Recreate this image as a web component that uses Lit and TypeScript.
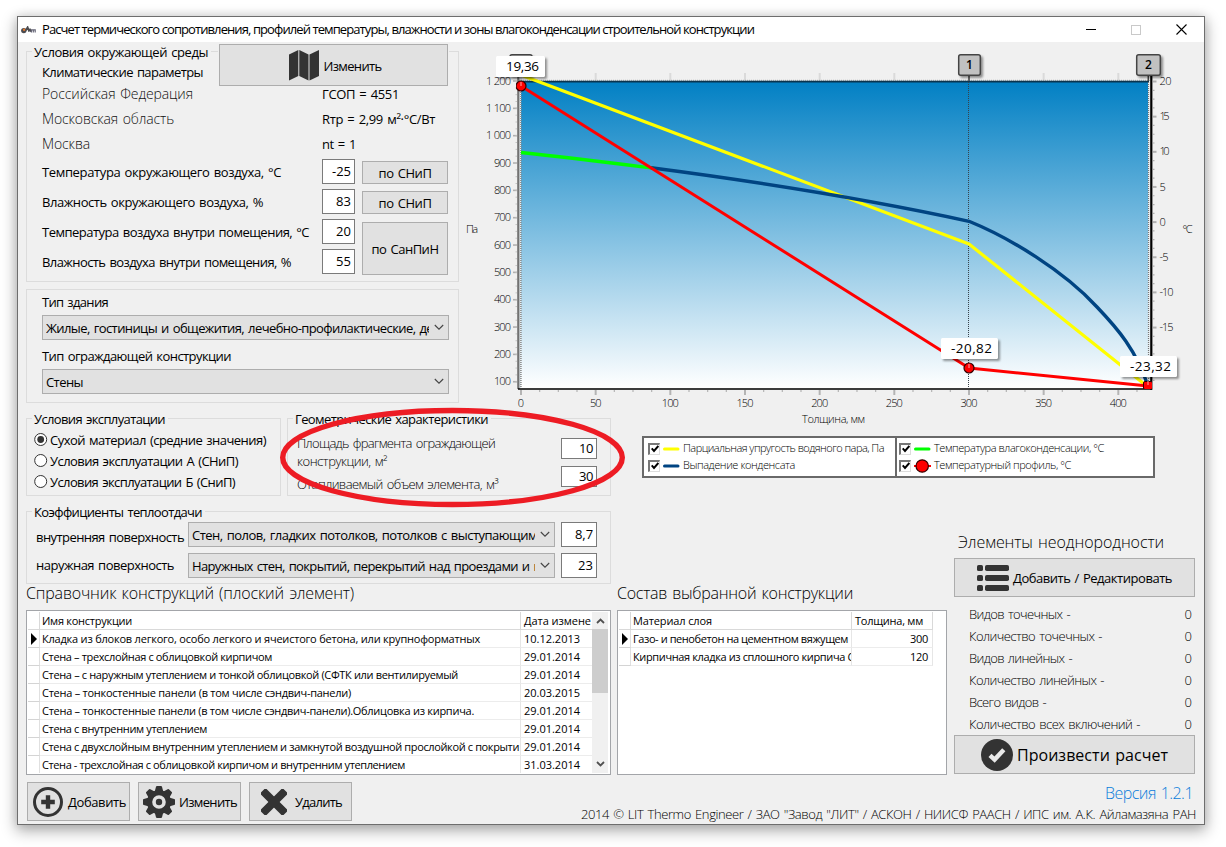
import { LitElement, html, css, svg } from "lit";
import { customElement } from "lit/decorators.js";

/** Text run set to a known advance width; letter-spacing is derived after layout. */
const t = (text: string, width: number, cls = "") =>
  html`<span class="t ${cls}" data-w=${width}>${text}</span>`;

const X = (mm: number) => 521 + mm * 1.4933;
const YP = (pa: number) => 81 + (1200 - pa) * 0.2734;
const YT = (deg: number) => 81.5 + (20 - deg) * 7.03;

const constructions: [string, number, string][] = [
  ["Кладка из блоков легкого, особо легкого и ячеистого бетона, или крупноформатных", 438, "10.12.2013"],
  ["Стена – трехслойная с облицовкой кирпичом", 230, "29.01.2014"],
  ["Стена – с наружным утеплением и тонкой облицовкой (СФТК или вентилируемый", 416, "29.01.2014"],
  ["Стена – тонкостенные панели (в том числе сэндвич-панели)", 309, "20.03.2015"],
  ["Стена – тонкостенные панели (в том числе сэндвич-панели).Облицовка из кирпича.", 432, "29.01.2014"],
  ["Стена с внутренним утеплением", 165, "29.01.2014"],
  ["Стена с двухслойным внутренним утеплением и замкнутой воздушной прослойкой с покрыти", 477, "29.01.2014"],
  ["Стена - трехслойная с облицовкой кирпичом и внутренним утеплением", 363, "31.03.2014"],
];

const layers: [string, number, string][] = [
  ["Газо- и пенобетон на цементном вяжущем", 215, "300"],
  ["Кирпичная кладка из сплошного кирпича С", 221, "120"],
];

const stats: [string, number][] = [
  ["Видов точечных -", 101],
  ["Количество точечных -", 133],
  ["Видов линейных -", 103],
  ["Количество линейных -", 135],
  ["Всего видов -", 77],
  ["Количество всех включений -", 171],
];

const chevron = html`<svg class="chev" width="10" height="7" viewBox="0 0 10 7"><path d="M.8 1 5 5.2 9.2 1" fill="none" stroke="#444" stroke-width="1.1"/></svg>`;
const marker = html`<svg width="7" height="12" viewBox="0 0 7 12"><path d="M0 0 6 6 0 12z" fill="#000"/></svg>`;

const mapIcon = html`<svg width="30" height="31" viewBox="0 0 30 31" fill="#333"><path d="M0 4.5 9.3 0v26L0 30.5z"/><path d="M10.3 0l9.2 4.5v26L10.3 26z"/><path d="M20.5 4.5 30 0v26l-9.5 4.5z"/></svg>`;
const plusIcon = html`<svg width="30" height="30" viewBox="0 0 30 30" fill="none" stroke="#333"><circle cx="15" cy="15" r="13.5" stroke-width="3"/><path d="M15 8.2v13.6M8.2 15h13.6" stroke-width="4.4"/></svg>`;
const gearIcon = html`<svg width="32" height="32" viewBox="-16 -16 32 32" fill="#333">
  ${[0, 45, 90, 135, 180, 225, 270, 315].map((a) => svg`<path transform="rotate(${a})" d="M-4.4-10 -3-15.2Q-2.8-16-2-16H2Q2.8-16 3-15.2L4.4-10z"/>`)}
  <path fill-rule="evenodd" d="M-12 0a12 12 0 1 0 24 0a12 12 0 1 0 -24 0zM-6.8 0a6.8 6.8 0 1 1 13.6 0a6.8 6.8 0 1 1 -13.6 0z"/><circle r="3.2"/></svg>`;
const crossIcon = html`<svg width="26" height="26" viewBox="-13 -13 26 26" fill="#333"><rect x="-16" y="-4" width="32" height="8" rx="1.8" transform="rotate(45)"/><rect x="-16" y="-4" width="32" height="8" rx="1.8" transform="rotate(-45)"/></svg>`;
const listIcon = html`<svg width="32" height="26" viewBox="0 0 32 26" fill="#333">
  ${[0, 10, 20].map((y) => svg`<rect x="0" y=${y} width="6" height="6" rx="1.6"/><rect x="8" y=${y} width="24" height="6" rx="1.8"/>`)}</svg>`;
const checkIcon = html`<svg width="32" height="32" viewBox="0 0 32 32"><circle cx="16" cy="16" r="16" fill="#333"/><path d="M9 16.3 13.6 20.6 22.8 10.8" fill="none" stroke="#e9e9e9" stroke-width="4.4"/></svg>`;

@customElement("app-root")
export class AppRoot extends LitElement {
  static styles = css`
    :host { display: block; position: relative; width: 1226px; height: 847px; overflow: hidden; background: #fff;
      font: 13px/16px "Open Sans", "Noto Sans", sans-serif; color: #000; }
    * { box-sizing: border-box; }
    svg { display: block; flex: none; }
    .t { white-space: pre; display: inline-block; flex: none; padding-bottom: 2px; word-spacing: 1.2px; }
    .title, .f11, .lg { word-spacing: 0; }
    .light { font-weight: 300; }
    .l14 { font-weight: 300; font-size: 14px; color: #111; }
    .l16 { font-weight: 300; font-size: 16px; line-height: 20px; }
    .s16 { font-size: 16px; line-height: 20px; }
    .f11 { font-size: 11px; padding-bottom: 0; }
    .lg { font-size: 11px; font-weight: 300; }
    .clip { overflow: hidden; flex: 1; min-width: 0; display: flex; }

    .window { margin: 16px 0 0 17px; width: 1188px; height: 809px; border: 1px solid #6e6e6e; background: #f0f0f0;
      display: flex; flex-direction: column; box-shadow: 0 5px 14px 1px rgba(0,0,0,.32), 0 0 9px rgba(0,0,0,.10); }
    .titlebar { height: 25px; background: #fff; display: flex; align-items: center; flex: none; padding-left: 3px; }
    .titlebar .t { margin-left: 6px; }
    .winbtns { margin-left: auto; display: flex; align-items: center; gap: 35px; padding-right: 17px; }
    .top { display: flex; height: 363px; flex: none; padding-left: 8px; }
    .topleft { width: 434px; flex: none; display: flex; flex-direction: column; padding: 9px 1px 0 0; }
    .chart { overflow: visible; }

    .group { border: 1px solid #dcdcdc; display: flex; flex-direction: column; }
    .legend { margin: -8px 0 0 5px; height: 16px; padding: 0 3px 0 2px; background: #f0f0f0; align-self: flex-start; flex: none; display: flex; }
    .env { height: 231px; }
    .envhead { display: flex; height: 33px; margin-top: -8px; flex: none; }
    .envhead .legend { margin-top: 0; }
    .envtitles { display: flex; flex-direction: column; align-items: flex-start; width: 192px; }
    .envtitles > .t { margin: 4px 0 0 15px; }
    .button { background: #e1e1e1; border: 1px solid #adadad; display: flex; align-items: center; justify-content: center; flex: none; }
    .mapbtn { width: 229px; height: 42px; gap: 5px; box-shadow: -1px 0 0 #f0f0f0, 1px 0 0 #f0f0f0; padding-left: 3px; }
    .mapbtn .t { margin-top: 4px; }
    .place { display: grid; grid-template-columns: 280px 1fr; grid-auto-rows: 25px; align-items: center; justify-items: start; padding-left: 15px; margin-top: 5px; }
    .params { display: grid; grid-template-columns: 280px 33px 86px; grid-auto-rows: 30px; align-items: center; padding-left: 15px; }
    .params > .t { margin-top: 2px; }
    .params .input { align-self: start; margin-top: 2px; }
    .params .button { margin-left: 7px; height: 23px; width: 86px; align-self: start; margin-top: 4px; padding-top: 3px; }
    .params .tall { grid-column: 3; grid-row: 3 / 5; height: 53px; margin-top: 5px; }
    .input { background: #fff; border: 1px solid #7a7a7a; display: flex; align-items: center; justify-content: flex-end; padding: 0 3px 0 0; height: 25px; }
    .types { margin-top: 7px; height: 114px; padding: 4px 9px 0 15px; align-items: flex-start; }
    .types .combo { margin: 3px 0 8px; width: 407px; }
    .combo { height: 25px; background: #e1e1e1; border: 1px solid #adadad; display: flex; align-items: center; padding: 3px 4px 0 3px; flex: none; }
    .combo .chev { margin: -4px 0 0 5px; }

    .bottom { display: flex; flex: 1; padding-left: 8px; gap: 6px; }
    .leftcol { width: 585px; flex: none; display: flex; flex-direction: column; padding-top: 13px; }
    .pair { display: flex; gap: 6px; height: 78px; flex: none; }
    .cond { width: 255px; }
    .radios { display: flex; flex-direction: column; padding: 2px 0 0 7px; }
    .radio { display: flex; align-items: center; height: 21px; gap: 2px; }
    .radio .t { padding-bottom: 0; }
    .geo { flex: 1; }
    .geobody { display: flex; justify-content: space-between; padding: 8px 13px 0 9px; height: 69px; }
    .geotext { display: flex; flex-direction: column; align-items: flex-start; }
    .geotext .t { height: 18px; }
    .geotext .t:last-child { margin-top: 5px; }
    .geoinputs { display: flex; flex-direction: column; gap: 7px; padding-top: 3px; }
    .geoinputs .input { width: 36px; height: 21px; }
    .geoinputs .input .t { padding-bottom: 1px; }
    .coef { height: 73px; margin-top: 15px; flex: none; }
    .coefgrid { display: grid; grid-template-columns: 152px 367px 42px; row-gap: 6px; padding: 2px 0 0 9px; align-items: center; }
    .coefgrid .input { margin-left: 6px; width: 36px; }
    .coefgrid > .t:nth-child(1) { margin-top: 7px; }
    .heading { height: 26px; flex: none; display: flex; align-items: center; padding-bottom: 6px; }

    .grid { height: 165px; background: #fff; border: 1px solid #a3a5a9; padding: 1px; display: flex; flex: none; }
    .rows { display: flex; flex-direction: column; flex: 1; min-width: 0; }
    .row { display: grid; height: 18px; flex: none; }
    .row > div { display: flex; align-items: center; overflow: hidden; border-right: 1px solid #e6e6e6; border-bottom: 1px solid #ececec; padding-left: 2px; }
    .row > div:first-child { border-color: #d4d4d4; border-right-color: #e0e0e0; padding-left: 3px; }
    .head > div, .head > div:first-child { border-color: #d9d9d9; }
    .g1 .row { grid-template-columns: 12px 481px 73px; }
    .g1 .row > div:last-child { border-right: 0; padding-left: 3px; }
    .g1 .row:last-child > div { border-bottom: 0; height: 17px; }
    .g2 .row { grid-template-columns: 12px 221px 81px; }
    .g2 .row > div:last-child { padding-left: 3px; }
    .g2 .row:not(.head) > div:last-child { justify-content: flex-end; padding-right: 4px; }
    .scroll { width: 16px; background: #f0f0f0; display: flex; flex-direction: column; align-items: center; margin-right: 1px; }
    .thumb { width: 16px; height: 64px; background: #cdcdcd; }
    .up { margin: 6px 0 5px; } .down { margin: auto 0 6px; }
    .actions { display: flex; gap: 8px; padding: 7px 0 0 1px; }
    .actions .button { width: 103px; height: 39px; justify-content: flex-start; padding-left: 5px; }
    .actions .t { margin: 3px 0 0 5px; }
    .actions .b2 { padding-left: 4px; }
    .actions .b2 .t { margin-left: 4px; }
    .actions .b3 { padding-left: 11px; }
    .actions .b3 .t { margin-left: 8px; }

    .rightcol { flex: 1; display: flex; flex-direction: column; min-width: 0; }
    .chartlegend { margin: 31px 0 0 25px; width: 513px; height: 42px; flex: none; border: 2px solid #696969; background: #fff; display: grid; grid-template-columns: 251px 1fr; }
    .lcol { display: flex; flex-direction: column; padding: 2px 0 0 4px; }
    .lcol + .lcol { border-left: 2px solid #696969; padding-left: 2px; }
    .litem { display: flex; align-items: center; height: 17px; gap: 3px; }
    .check { width: 12px; height: 12px; border: 1px solid #777; border-width: 2px 1px 1px 2px; border-right-color: #ddd; border-bottom-color: #ddd; background: #fff; display: flex; align-items: center; justify-content: center; }
    .lower { display: flex; gap: 7px; height: 297px; flex: none; }
    .comp { width: 330px; padding-top: 106px; }
    .side { width: 241px; display: flex; flex-direction: column; padding-top: 55px; }
    .side .heading { height: 25px; padding-left: 4px; }
    .side .button { width: 241px; height: 39px; gap: 4px; }
    .side .button .t { padding-bottom: 0; }
    .stat { display: flex; justify-content: space-between; align-items: center; height: 22px; padding: 0 3px 0 15px; }
    .stats { padding: 7px 0 0; height: 138px; }
    .foot { margin-top: auto; display: flex; flex-direction: column; align-items: flex-end; padding: 0 8px 0 0; }
    .version { color: #0a7ddb; margin: 0 3px 1px 0; }
    .mark { position: absolute; left: 276px; top: 404px; pointer-events: none; }
    .ax { font: 300 11px "Open Sans", "Noto Sans", sans-serif; fill: #000; }
    .val { font: 13.5px "Open Sans", "Noto Sans", sans-serif; }
    .tag { font: 600 12px "Open Sans", "Noto Sans", sans-serif; }
    .shadow { filter: drop-shadow(2px 2px 1px rgba(0,0,0,.4)); }
  `;

  firstUpdated() {
    const range = document.createRange();
    this.renderRoot.querySelectorAll<HTMLElement>(".t[data-w]").forEach((el) => {
      const target = Number(el.dataset.w);
      const n = (el.textContent ?? "").length;
      range.selectNodeContents(el);
      const natural = range.getBoundingClientRect().width;
      if (n > 1) el.style.letterSpacing = `${(target - natural) / n}px`;
    });
  }

  chart() {
    const range = (n: number) => Array.from({ length: n }, (_, i) => i);
    const valueTag = (x: number, y: number, w: number, s: string, len: number) => svg`
      <rect class="shadow" x=${x} y=${y} width=${w} height="21" rx="1.5" fill="#fff"/>
      <text class="val" x=${x + w / 2 + 2} y=${y + 15} text-anchor="middle" textLength=${len}>${s}</text>`;
    const numTag = (x: number, w: number, s: string) => svg`
      <rect class="shadow" x=${x} y="54.7" width=${w} height="20.6" rx="2" fill="#c1c1c1" stroke="#444" stroke-width="1.5"/>
      <text class="tag" x=${x + w / 2} y="68.5" text-anchor="middle">${s}</text>`;
    const dot = (x: number, y: number) => svg`<circle cx=${x} cy=${y} r="5" fill="#f00" stroke="#300" stroke-width="1.2"/><path d="M${x} ${y - 4}v4" stroke="#faa"/>`;
    return html`<svg class="chart" width="744" height="388" viewBox="460 42 744 388">
      <defs>
        <linearGradient id="sky" x1="0" y1="0" x2="0" y2="1"><stop offset="0" stop-color="#0280c4"/><stop offset="1" stop-color="#fff"/></linearGradient>
        <clipPath id="plot"><rect x="516" y="60" width="636" height="329"/></clipPath>
      </defs>
      <rect x="519" y="80" width="631" height="308" fill="#e6eef2"/>
      <rect x="521" y="82" width="627" height="306" fill="url(#sky)"/>
      ${range(9).map((i) => svg`<path d="M${X(i * 50)} 73v7" stroke="#dadada" stroke-width="2"/>`)}
      ${range(34).map((i) => svg`<path d="M${X(i * 12.5)} 390v${i % 4 ? 2 : 5}" stroke="#b4b4b4" stroke-width=${i % 4 ? 1.2 : 2}/>`)}
      ${range(12).map((i) => svg`<path d="M513 ${YP(100 + i * 100)}h4" stroke="#b0b0b0" stroke-width="1.6"/>
        <text class="ax" x="511" y=${YP(100 + i * 100) + 3.6} text-anchor="end" textLength=${i > 8 ? 25 : 17}>${i > 8 ? `1 ${i === 9 ? "000" : i === 10 ? "100" : "200"}` : (i + 1) * 100}</text>`)}
      ${range(45).map((i) => svg`<path d="M515.5 ${YP(100 + i * 25)}h1.5" stroke="#c4c4c4" stroke-width="1"/>`)}
      ${range(35).map((i) => svg`<path d="M1153 ${YT(20 - i * 1.25)}h${i % 4 ? 1.5 : 3.5}" stroke="#b0b0b0" stroke-width=${i % 4 ? 1.2 : 2}/>`)}
      ${([[20, 12], [15, 10], [10, 10], [5, 5.5], [0, 6], [-5, 9], [-10, 14], [-15, 14]] as [number, number][]).map(([v, w]) => svg`<text class="ax" x="1159.5" y=${YT(v) + 3.6} textLength=${w}>${v}</text>`)}
      ${range(9).map((i) => svg`<text class="ax" x=${X(i * 50)} y="407" text-anchor="middle" textLength=${[6, 11.5, 17][String(i * 50).length - 1]}>${i * 50}</text>`)}
      <text class="ax" x="466" y="233" textLength="12">Па</text>
      <text class="ax" x="1182.5" y="233" textLength="10">°С</text>
      <text class="ax" x="802" y="423" textLength="63">Толщина, мм</text>
      <path d="M519 80.3H1150" stroke="#aaa" stroke-dasharray="1 1"/>
      <path d="M519 81.7H1149" stroke="#0a3550" stroke-width="1.8"/>
      <path d="M518.3 64V389" stroke="#727272" stroke-width="2.2"/>
      <path d="M520.9 82V388" stroke="#8a8a8a" stroke-dasharray="1 1" stroke-width="1.6"/>
      <path d="M518 389H1152" stroke="#000" stroke-width="1.6"/>
      <path d="M1151.3 74V389.8" stroke="#000" stroke-width="2.2"/>
      <path d="M1148.5 74V388" stroke="#777" stroke-dasharray="1 1" stroke-width="1.2"/>
      <path d="M1148.3 74V81M969 74V81" stroke="#444" stroke-width="1.5"/>
      <path d="M968.5 82V388" stroke="#37424a" stroke-dasharray="1 1"/>
      <g clip-path="url(#plot)" fill="none" stroke-linejoin="round">
        <path d="M521 75 969 244 1148 387" stroke="#ff0" stroke-width="3.2"/>
        <path d="M521 152.5C568 157.5 612 163 654 168.2" stroke="#0f0" stroke-width="3.4"/>
        <path d="M651 167.8C760 182 880 202 969 221.3C1010 238 1064 271 1097 307C1118 329 1136 350 1148 386" stroke="#004482" stroke-width="3.4"/>
        <path d="M521 86 969 368 1148 386" stroke="#f00" stroke-width="3"/>
        ${dot(521, 86)}${dot(969, 368)}<rect x="1143.5" y="381.5" width="9" height="8" rx="1.5" fill="#f00" stroke="#300"/><path d="M1148 381v4" stroke="#faa"/>
      </g>
      ${numTag(510, 22, "")}${numTag(958.7, 21.6, "1")}${numTag(1136.7, 23.6, "2")}
      ${valueTag(496, 56, 49, "19,36", 33)}${valueTag(941, 338, 57, "-20,82", 41)}${valueTag(1120, 356, 57, "-23,32", 41)}
    </svg>`;
  }

  legendItem(swatch: unknown, text: string, w: number) {
    return html`<div class="litem"><div class="check"><svg width="8" height="8" viewBox="0 0 8 8"><path d="M.7 3.4 3 5.9 7.4 1" fill="none" stroke="#000" stroke-width="2"/></svg></div>
      <svg width="17" height="16" viewBox="0 0 17 16">${swatch}</svg>${t(text, w, "lg")}</div>`;
  }

  render() {
    const line = (c: string) => svg`<path d="M1.5 8H15" stroke=${c} stroke-width="3" stroke-linecap="round"/>`;
    const radio = (on: boolean, s: string, w: number) => html`<div class="radio"><svg width="14" height="14" viewBox="0 0 14 14"><circle cx="6.7" cy="6.5" r="6" fill="#fff" stroke="#333"/>${on ? svg`<circle cx="6.7" cy="6.5" r="3.4" fill="#333"/>` : ""}</svg>${t(s, w)}</div>`;
    return html`
      <div class="window">
        <div class="titlebar">
          <svg width="15" height="8" viewBox="0 0 15 8"><circle cx="2.8" cy="4.6" r="2.7" fill="#4b4b50"/><circle cx="3.2" cy="3.8" r="1.3" fill="#e07a30"/><path d="M4.6 4.6 6.6 1.2 8.2 5.6M8.6 2.6 10 5.6" fill="none" stroke="#4c4c50" stroke-width="1.8"/><path d="M10.4 6.6V3.8h3.8v2.8M12.3 4v2.6" fill="none" stroke="#667" stroke-width="1.2"/></svg>
          ${t("Расчет термического сопротивления, профилей температуры, влажности и зоны влагоконденсации строительной конструкции", 712, "title")}
          <div class="winbtns">
            <svg width="10" height="11" viewBox="0 0 10 11"><path d="M0 5.5H10" stroke="#000" stroke-width="1"/></svg>
            <svg width="10" height="10" viewBox="0 0 10 10"><rect x=".5" y=".5" width="9" height="9" fill="none" stroke="#c9c9c9"/></svg>
            <svg width="11" height="11" viewBox="0 0 11 11"><path d="M.5.5 10.5 10.5M10.5.5.5 10.5" stroke="#000" stroke-width="1.1"/></svg>
          </div>
        </div>
        <div class="top">
          <div class="topleft">
            <div class="group env">
              <div class="envhead">
                <div class="envtitles"><div class="legend">${t("Условия окружающей среды", 174)}</div>${t("Климатические параметры", 161)}</div>
                <div class="button mapbtn">${mapIcon}${t("Изменить", 58)}</div>
              </div>
              <div class="place">
                ${t("Российская Федерация", 151, "l14")}${t("ГСОП = 4551", 77)}
                ${t("Московская область", 132, "l14")}${t("Rтр = 2,99 м²·°C/Вт", 113)}
                ${t("Москва", 48, "l14")}${t("nt = 1", 34)}
              </div>
              <div class="params">
                ${t("Температура окружающего воздуха, °C", 239)}<div class="input">${t("-25", 19)}</div><div class="button">${t("по СНиП", 53)}</div>
                ${t("Влажность окружающего воздуха, %", 221)}<div class="input">${t("83", 15)}</div><div class="button">${t("по СНиП", 53)}</div>
                ${t("Температура воздуха внутри помещения, °C", 267)}<div class="input">${t("20", 15)}</div><div class="button tall">${t("по СанПиН", 67)}</div>
                ${t("Влажность воздуха внутри помещения, %", 249)}<div class="input">${t("55", 15)}</div>
              </div>
            </div>
            <div class="group types">
              ${t("Тип здания", 66)}
              <div class="combo"><div class="clip">${t("Жилые, гостиницы и общежития, лечебно-профилактические, де", 387)}</div>${chevron}</div>
              ${t("Тип ограждающей конструкции", 189)}
              <div class="combo"><div class="clip">${t("Стены", 37)}</div>${chevron}</div>
            </div>
          </div>
          ${this.chart()}
        </div>
        <div class="bottom">
          <div class="leftcol">
            <div class="pair">
              <div class="group cond">
                <div class="legend">${t("Условия эксплуатации", 131)}</div>
                <div class="radios">
                  ${radio(true, "Сухой материал (средние значения)", 216)}
                  ${radio(false, "Условия эксплуатации А (СНиП)", 188)}
                  ${radio(false, "Условия эксплуатации Б (СниП)", 185)}
                </div>
              </div>
              <div class="group geo">
                <div class="legend">${t("Геометрические характеристики", 193)}</div>
                <div class="geobody">
                  <div class="geotext">${t("Площадь фрагмента ограждающей", 198, "light")}${t("конструкции, м²", 90, "light")}${t("Отапливаемый объем элемента, м³", 201, "light")}</div>
                  <div class="geoinputs"><div class="input">${t("10", 14)}</div><div class="input">${t("30", 14)}</div></div>
                </div>
              </div>
            </div>
            <div class="group coef">
              <div class="legend">${t("Коэффициенты теплоотдачи", 168)}</div>
              <div class="coefgrid">
                ${t("внутренняя поверхность", 148)}<div class="combo"><div class="clip">${t("Стен, полов, гладких потолков, потолков с выступающим", 345)}</div>${chevron}</div><div class="input">${t("8,7", 18)}</div>
                ${t("наружная поверхность", 138)}<div class="combo"><div class="clip">${t("Наружных стен, покрытий, перекрытий над проездами и н", 349)}</div>${chevron}</div><div class="input">${t("23", 15)}</div>
              </div>
            </div>
            <div class="heading">${t("Справочник конструкций (плоский элемент)", 328, "l16")}</div>
            <div class="grid g1">
              <div class="rows">
                <div class="row head"><div></div><div>${t("Имя конструкции", 90, "f11")}</div><div>${t("Дата измене", 67, "f11")}</div></div>
                ${constructions.map(([n, w, d], i) => html`<div class="row"><div>${i ? "" : marker}</div><div>${t(n, w, "f11")}</div><div>${t(d, 56, "f11")}</div></div>`)}
              </div>
              <div class="scroll">
                <svg class="up" width="9" height="6" viewBox="0 0 9 6"><path d="M1 5 4.5 1.5 8 5" fill="none" stroke="#505050" stroke-width="1.8"/></svg>
                <div class="thumb"></div>
                <svg class="down" width="9" height="6" viewBox="0 0 9 6"><path d="M1 1 4.5 4.5 8 1" fill="none" stroke="#505050" stroke-width="1.8"/></svg>
              </div>
            </div>
            <div class="actions">
              <div class="button">${plusIcon}${t("Добавить", 58)}</div>
              <div class="button b2">${gearIcon}${t("Изменить", 58)}</div>
              <div class="button b3">${crossIcon}${t("Удалить", 47)}</div>
            </div>
          </div>
          <div class="rightcol">
            <div class="chartlegend">
              <div class="lcol">${this.legendItem(line("#ff0"), "Парциальная упругость водяного пара, Па", 201)}${this.legendItem(line("#004482"), "Выпадение конденсата", 112)}</div>
              <div class="lcol">${this.legendItem(line("#0f0"), "Температура влагоконденсации, °С", 170)}${this.legendItem(svg`<path d="M0 8H17" stroke="#f00" stroke-width="2"/><circle cx="8.2" cy="8" r="6.2" fill="#f00" stroke="#300" stroke-width="1.2"/>`, "Температурный профиль, °С", 137)}</div>
            </div>
            <div class="lower">
              <div class="comp">
                <div class="heading">${t("Состав выбранной конструкции", 236, "l16")}</div>
                <div class="grid g2"><div class="rows">
                  <div class="row head"><div></div><div>${t("Материал слоя", 79, "f11")}</div><div>${t("Толщина, мм", 68, "f11")}</div></div>
                  ${layers.map(([n, w, d], i) => html`<div class="row"><div>${i ? "" : marker}</div><div>${t(n, w, "f11")}</div><div>${t(d, 18, "f11")}</div></div>`)}
                </div></div>
              </div>
              <div class="side">
                <div class="heading">${t("Элементы неоднородности", 206, "l16")}</div>
                <div class="button">${listIcon}${t("Добавить / Редактировать", 159)}</div>
                <div class="stats">${stats.map(([s, w]) => html`<div class="stat">${t(s, w, "light")}${t("0", 7, "light")}</div>`)}</div>
                <div class="button">${checkIcon}${t("Произвести расчет", 151, "s16")}</div>
              </div>
            </div>
            <div class="foot">
              ${t("Версия 1.2.1", 88, "l16 version")}
              ${t('2014 © LIT Thermo Engineer / ЗАО "Завод "ЛИТ" / АСКОН / НИИСФ РААСН / ИПС им. А.К. Айламазяна РАН', 615, "light")}
            </div>
          </div>
        </div>
      </div>
      <svg class="mark" width="353" height="107" viewBox="276 404 353 107"><ellipse cx="452.5" cy="457.5" rx="169.8" ry="47" fill="none" stroke="#ed1c24" stroke-width="5.4"/></svg>
    `;
  }
}
